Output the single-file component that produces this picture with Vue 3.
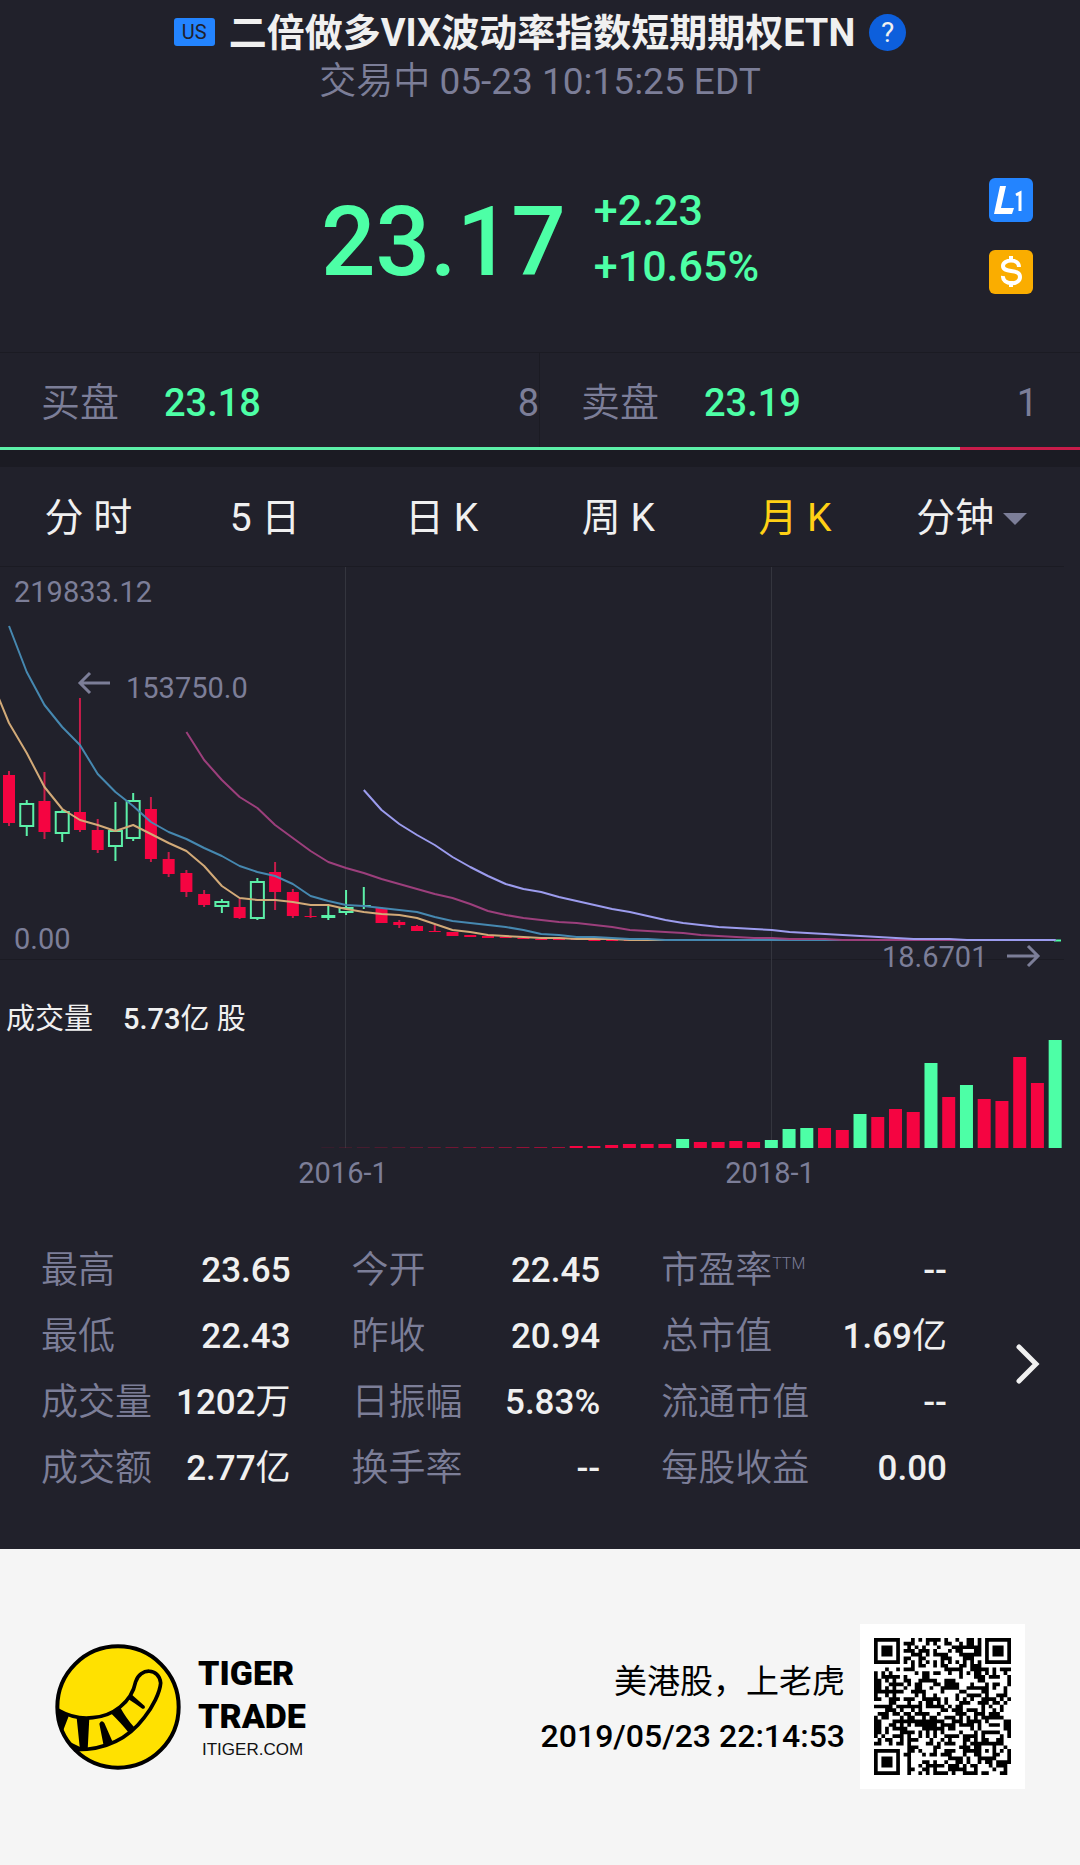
<script setup>
const STEP = 17.74
const cx = (i) => 9 + STEP * i

// [rising, open/close top, open/close bottom, wick top, wick bottom]
const candles = [
  [0, 775, 823, 771, 826], [1, 804, 826, 800, 836], [0, 801, 832, 772, 839], [1, 812, 833, 810, 842],
  [0, 812, 830, 698, 832], [0, 830, 850, 819, 853], [1, 831, 846, 802, 861], [1, 801, 838, 793, 841],
  [0, 809, 859, 797, 862], [0, 859, 874, 852, 877], [0, 873, 892, 870, 897], [0, 894, 905, 890, 907],
  [1, 902, 906, 899, 913], [0, 907, 918, 899, 919], [1, 882, 918, 878, 920], [0, 872, 892, 862, 910],
  [0, 892, 916, 889, 918], [0, 916, 917, 908, 918], [1, 915, 918, 905, 920], [1, 908, 912, 890, 915],
  [1, 905, 906, 887, 909], [0, 908, 923, 907, 923], [0, 922, 925, 920, 928], [0, 926, 931, 925, 931],
  [0, 931, 932, 925, 932], [0, 932, 936, 932, 936], [0, 935, 937, 935, 937], [0, 936, 938, 936, 938],
  [0, 937, 938, 937, 938], [0, 938, 939, 938, 939], [0, 939, 940, 939, 940], [0, 939, 940, 939, 940],
  [0, 939, 940, 939, 940], [0, 940, 941, 940, 941], [0, 940, 941, 940, 941], [0, 940, 941, 940, 941],
  [1, 940, 941, 940, 941], [0, 940, 941, 940, 941], [1, 940, 941, 940, 941],
].map(([up, top, bottom, high, low], i) => ({ up, top, bottom, high, low, x: cx(i) }))

const averages = [
  { name: 'ma5', from: -1, y: [680, 723, 753, 787, 809, 820, 825, 831, 825, 834, 843, 851, 866, 886, 898, 900, 900, 902, 905, 905, 909, 912, 914, 915, 918, 924, 930, 932, 935, 936, 937, 938, 938, 939, 939, 939, 940, 940] },
  { name: 'ma10', from: 0, y: [626, 672, 705, 727, 745, 774, 792, 806, 822, 832, 839, 848, 856, 866, 872, 876, 884, 896, 901, 905, 906, 908, 910, 912, 917, 921, 923, 925, 927, 930, 934, 935, 937, 937, 938, 939, 939, 940, 940] },
  { name: 'ma20', from: 10, y: [732, 760, 780, 797, 808, 825, 838, 851, 862, 868, 873, 879, 884, 889, 894, 898, 904, 911, 915, 918, 920, 922, 923, 925, 927, 930, 931, 932, 933, 935, 936, 937, 938, 938, 939, 939, 939, 940, 940, 940, 940] },
  { name: 'ma30', from: 20, y: [790, 810, 824, 835, 845, 857, 867, 876, 884, 889, 892, 897, 901, 905, 909, 912, 916, 920, 923, 925, 927, 928, 929, 930, 932, 933, 934, 935, 936, 937, 938, 939, 939, 939, 940, 940, 940, 940, 940, 940] },
].map(({ name, from, y }) => {
  const pts = y.map((v, k) => `${cx(from + k)},${v}`)
  if (from + y.length < 60) pts.push(`${cx(59)},940`)
  return { name, points: pts.join(' ') }
})

const heights = [
  1, 1, 1, 1, 1, 1, 1, 1, 1, 1, 1, 1, 1, 1, 2, 2, 3, 4, 4, 4, 9, 6, 6, 7, 6, 8, 19, 20, 20, 18,
  34, 31, 39, 36, 85, 51, 63, 49, 47, 91, 65, 108,
]
const rising = [38, 43, 44, 45, 48, 52, 54, 59]
const volumes = heights.map((h, k) => ({
  h, x: cx(k + 18), up: rising.includes(k + 18), opacity: k < 14 ? 0.1 + k * 0.04 : 1,
}))

const tabs = ['分 时', '5 日', '日 K', '周 K', '月 K']

const stats = [
  ['最高', '23.65', ''], ['今开', '22.45', ''], ['市盈率', '--', '', 'TTM'],
  ['最低', '22.43', ''], ['昨收', '20.94', ''], ['总市值', '1.69', '亿'],
  ['成交量', '1202', '万'], ['日振幅', '5.83%', ''], ['流通市值', '--', ''],
  ['成交额', '2.77', '亿'], ['换手率', '--', ''], ['每股收益', '0.00', ''],
]

const SIZE = 37
const finder = (x, y, ox, oy) => {
  const dx = x - ox
  const dy = y - oy
  if (dx < -1 || dx > 7 || dy < -1 || dy > 7) return null
  const r = Math.max(Math.abs(dx - 3), Math.abs(dy - 3))
  return r === 3 || r <= 1
}
let seed = 20190523
const next = () => {
  seed = (seed * 1103515245 + 12345) % 2147483648
  return seed / 2147483648
}
let qrPath = ''
for (let y = 0; y < SIZE; y++) {
  for (let x = 0; x < SIZE; x++) {
    const noise = next() < 0.5
    const f = finder(x, y, 0, 0) ?? finder(x, y, SIZE - 7, 0) ?? finder(x, y, 0, SIZE - 7)
    let on = f ?? noise
    if (f === null && (x === 6 || y === 6)) on = (x + y) % 2 === 0
    const r = Math.max(Math.abs(x - 30), Math.abs(y - 30))
    if (r <= 2) on = r !== 1
    if (on) qrPath += `M${x} ${y}h1v1h-1z`
  }
}
</script>

<template>
  <main class="page">
    <header class="head">
      <div class="title-row">
        <span class="market">US</span>
        <h1>二倍做多VIX波动率指数短期期权ETN</h1>
        <button class="help" aria-label="帮助">?</button>
      </div>
      <p class="status"><span>交易中</span> 05-23 10:15:25 EDT</p>
      <div class="quote">
        <div class="price-box">
          <strong class="price">23.17</strong>
          <div class="delta"><span>+2.23</span><span>+10.65%</span></div>
        </div>
        <div class="badges">
          <button class="badge level" aria-label="L1">
            <svg viewBox="0 0 44 44" aria-hidden="true">
              <path d="M11 8H17L12 30H25L23 36H5Z" fill="#fff" />
              <path d="M27 17L31 15V33" fill="none" stroke="#fff" stroke-width="3" />
            </svg>
          </button>
          <button class="badge cash" aria-label="$">
            <svg viewBox="0 0 44 44" aria-hidden="true" fill="none" stroke="#fff" stroke-width="4">
              <path d="M30 17C30 8 14 9 14 16C14 24 31 18 31 27C31 36 13 35 14 26M22 6V12M22 31V37" />
            </svg>
          </button>
        </div>
      </div>
    </header>

    <section class="book">
      <div class="side"><span class="label">买盘</span><b>23.18</b><span class="qty">8</span></div>
      <div class="side"><span class="label">卖盘</span><b>23.19</b><span class="qty">1</span></div>
    </section>
    <div class="ratio"><i class="buy"></i><i class="sell"></i></div>

    <nav class="tabs">
      <button v-for="t in tabs" :key="t" :class="{ active: t === '月 K' }">{{ t }}</button>
      <button class="more">分钟<i class="caret"></i></button>
    </nav>

    <svg class="chart" viewBox="0 566 1080 644" role="img" aria-label="月K">
      <path d="M0 566.5H1064M0 959.5H1064" stroke="#1b1b23" />
      <path d="M345.5 567V1148M771.5 567V1148" stroke="#34353e" />
      <g v-for="(c, i) in candles" :key="i" :class="c.up ? 'up' : 'down'">
        <template v-if="c.up">
          <path :d="`M${c.x} ${c.high}V${c.top}M${c.x} ${c.bottom}V${c.low}`" />
          <rect v-if="c.bottom - c.top > 3" class="hollow" :x="c.x - 6.5" :y="c.top" width="13" :height="c.bottom - c.top" />
          <rect v-else :x="c.x - 7" :y="c.top" width="14" :height="c.bottom - c.top" />
        </template>
        <template v-else>
          <path :d="`M${c.x} ${c.high}V${c.low}`" />
          <rect :x="c.x - 6" :y="c.top" width="12" :height="c.bottom - c.top" />
        </template>
      </g>
      <path d="M1054 940.5H1061" stroke="#4dffa6" stroke-width="2" />
      <polyline v-for="a in averages" :key="a.name" :class="a.name" :points="a.points" />
      <rect
        v-for="v in volumes" :key="v.x" :x="v.x - 7" :y="1148 - v.h" width="13" :height="v.h"
        :class="v.up ? 'vol-up' : 'vol-down'" :opacity="v.opacity"
      />
      <g class="axis">
        <text x="14" y="602">219833.12</text>
        <text x="126" y="698">153750.0</text>
        <text x="14" y="949">0.00</text>
        <text x="882" y="967">18.6701</text>
        <text x="343" y="1183" text-anchor="middle">2016-1</text>
        <text x="770" y="1183" text-anchor="middle">2018-1</text>
      </g>
      <path class="arrow" d="M110 683H80M90 673L80 683L90 693M1007 956H1037M1028 946L1038 956L1028 966" />
      <g class="volume-text">
        <text x="6" y="1029">成交量</text>
        <text x="123" y="1029"><tspan class="num">5.73</tspan>亿 股</text>
      </g>
    </svg>

    <section class="details">
      <dl>
        <div v-for="s in stats" :key="s[0]">
          <dt>{{ s[0] }}<sup v-if="s[3]">{{ s[3] }}</sup></dt>
          <dd>{{ s[1] }}<span>{{ s[2] }}</span></dd>
        </div>
      </dl>
      <button class="next" aria-label="更多">
        <svg viewBox="0 0 28 44" aria-hidden="true"><path d="M5 5L22 22L5 39" /></svg>
      </button>
    </section>

    <footer class="foot">
      <svg class="logo" viewBox="48 45 376 378" aria-hidden="true">
        <circle cx="236" cy="234" r="182" fill="#ffe100" stroke="#000" stroke-width="12" />
        <path
          d="M56 243C95 265 130 270 160 266C220 262 277 220 289 158C302 115 360 116 364 162C362 190 340 235 315 265C270 325 205 364 104 362"
          fill="none" stroke="#000" stroke-width="11"
        />
        <path d="M54 236L88 262L70 308C60 290 54 265 54 236ZM112 266H150L145 362L122 363ZM180 284Q187 271 195 282L219 337L193 350ZM214 252L242 234Q262 270 284 294L267 310Q246 283 214 252ZM262 207L276 196L316 231Q319 241 309 239L288 224Z" />
        <path d="M90 338L104 360L132 366L124 355Z" />
      </svg>
      <div class="brand"><b>TIGER</b><b>TRADE</b><span>ITIGER.COM</span></div>
      <div class="note"><p>美港股，上老虎</p><p class="time">2019/05/23 22:14:53</p></div>
      <div class="qr">
        <svg viewBox="0 0 37 37" role="img" aria-label="二维码"><path :d="qrPath" /></svg>
      </div>
    </footer>
  </main>
</template>

<style>
body { background: #f5f5f5; }
</style>

<style scoped>
* { box-sizing: border-box; margin: 0; padding: 0; }
.page {
  background: #21212b;
  color: #f0f0f0;
  font-family: Roboto, "Noto Sans CJK SC", sans-serif;
}
button { border: 0; background: none; color: inherit; font: inherit; }
svg { display: block; }

.head { padding: 8px 47px 58px; }
.title-row { display: flex; justify-content: center; align-items: center; height: 48px; }
.market {
  width: 41px; margin-right: 14px; border-radius: 3px;
  background: #2384ff; color: #21212b;
  font-size: 20px; line-height: 28px; text-align: center;
}
h1 { padding-top: 2px; font-size: 38px; line-height: 48px; font-weight: 700; white-space: nowrap; }
.help {
  width: 37px; height: 37px; margin-left: 14px; border-radius: 50%;
  background: #0d5fdc; color: #f0f0f0; font-size: 28px; line-height: 37px;
}
.status { padding-top: 2px; color: #7c7e98; font-size: 37px; line-height: 48px; text-align: center; font-weight: 400; }
.status span { font-weight: 350; }
.quote { display: grid; grid-template-columns: 1fr auto 1fr; margin-top: 72px; }
.price-box { grid-column: 2; display: flex; align-items: center; gap: 28px; color: #4dffa6; }
.price { padding-top: 12px; font-size: 96px; line-height: 104px; font-weight: 500; }
.delta { display: flex; flex-direction: column; padding-top: 4px; font-size: 43px; line-height: 56px; font-weight: 500; }
.badges { display: flex; flex-direction: column; gap: 28px; justify-self: end; }
.badge { width: 44px; height: 44px; border-radius: 6px; }
.level { background: #2384ff; }
.cash { background: #faad00; }

.book { display: grid; grid-template-columns: 1fr 1fr; border-top: 1px solid #1b1b23; }
.side { display: flex; align-items: center; padding: 22px 0 15px 41px; font-size: 38px; line-height: 57px; }
.side:first-child { border-right: 1px solid #1b1b23; }
.side:last-child { padding-right: 42px; }
.label, .qty { color: #7c7e98; }
.label { font-weight: 350; font-size: 39px; }
.side b { margin-left: 45px; color: #4dffa6; font-weight: 500; }
.qty { margin-left: auto; }
.ratio { display: flex; height: 20px; background: #1b1b23; }
.ratio i { height: 3px; }
.buy { flex: 8; background: #5cf0a8; }
.sell { flex: 1; background: #c81c4a; }

.tabs { display: grid; grid-template-columns: repeat(6, 1fr); padding: 23px 20px 19px 0; font-size: 39px; line-height: 57px; font-weight: 400; }
.tabs button { white-space: nowrap; }
.tabs .active { color: #ffd015; }
.more { display: flex; align-items: center; justify-content: center; }
.caret { margin-left: 9px; border: 12px solid transparent; border-top-color: #7c7e98; border-bottom: 0; }

.chart { width: 100%; }
.chart polyline { fill: none; stroke-width: 2; stroke-linejoin: round; }
.ma5 { stroke: #d2aa78; }
.ma10 { stroke: #4688b0; }
.ma20 { stroke: #9c3f7c; }
.ma30 { stroke: #9c9cee; }
.up path { stroke: #5cf0a8; stroke-width: 2; }
.up rect { fill: #5cf0a8; }
.up .hollow { fill: #21212b; stroke: #5cf0a8; stroke-width: 2; }
.down path { stroke: #c81c4a; stroke-width: 2; }
.down rect { fill: #f50441; }
.vol-up { fill: #4dffa6; }
.vol-down { fill: #f50441; }
.axis { fill: #7c7e98; font-size: 29px; font-weight: 400; }
.arrow { fill: none; stroke: #7c7e98; stroke-width: 3; }
.volume-text { fill: #f0f0f0; font-size: 29px; }
.num { font-weight: 500; }

.details { display: flex; align-items: center; padding: 28px 38px 47px 41px; }
dl { flex: 1; display: grid; grid-template-columns: 248fr 247fr 284fr; column-gap: 61px; grid-auto-rows: 66px; }
dl div { display: flex; justify-content: space-between; line-height: 66px; white-space: nowrap; }
dt { color: #7c7e98; font-size: 37px; font-weight: 350; }
sup { font-size: 16px; line-height: 20px; vertical-align: 14px; }
dd { font-size: 35px; font-weight: 500; }
dd span { font-weight: 400; }
.next { margin-left: 67px; padding-bottom: 12px; }
.next svg { width: 28px; height: 44px; fill: none; stroke: #f0f0f0; stroke-width: 5; stroke-linecap: round; }

.foot { display: flex; align-items: center; padding: 75px 55px 76px; background: #f5f5f5; color: #111; }
.logo { width: 126px; height: 126px; }
.brand { display: flex; flex-direction: column; margin-left: 17px; }
.brand b { font-size: 34px; line-height: 43px; font-weight: 900; color: #000; }
.brand span { font-family: "Liberation Sans", sans-serif; font-size: 17px; line-height: 24px; margin-left: 4px; }
.note { margin-left: auto; padding-top: 4px; text-align: right; font-size: 33px; line-height: 54px; color: #000; }
.time { font-size: 32px; font-weight: 500; }
.qr { width: 165px; margin-left: 15px; padding: 14px; background: #fff; }
</style>
